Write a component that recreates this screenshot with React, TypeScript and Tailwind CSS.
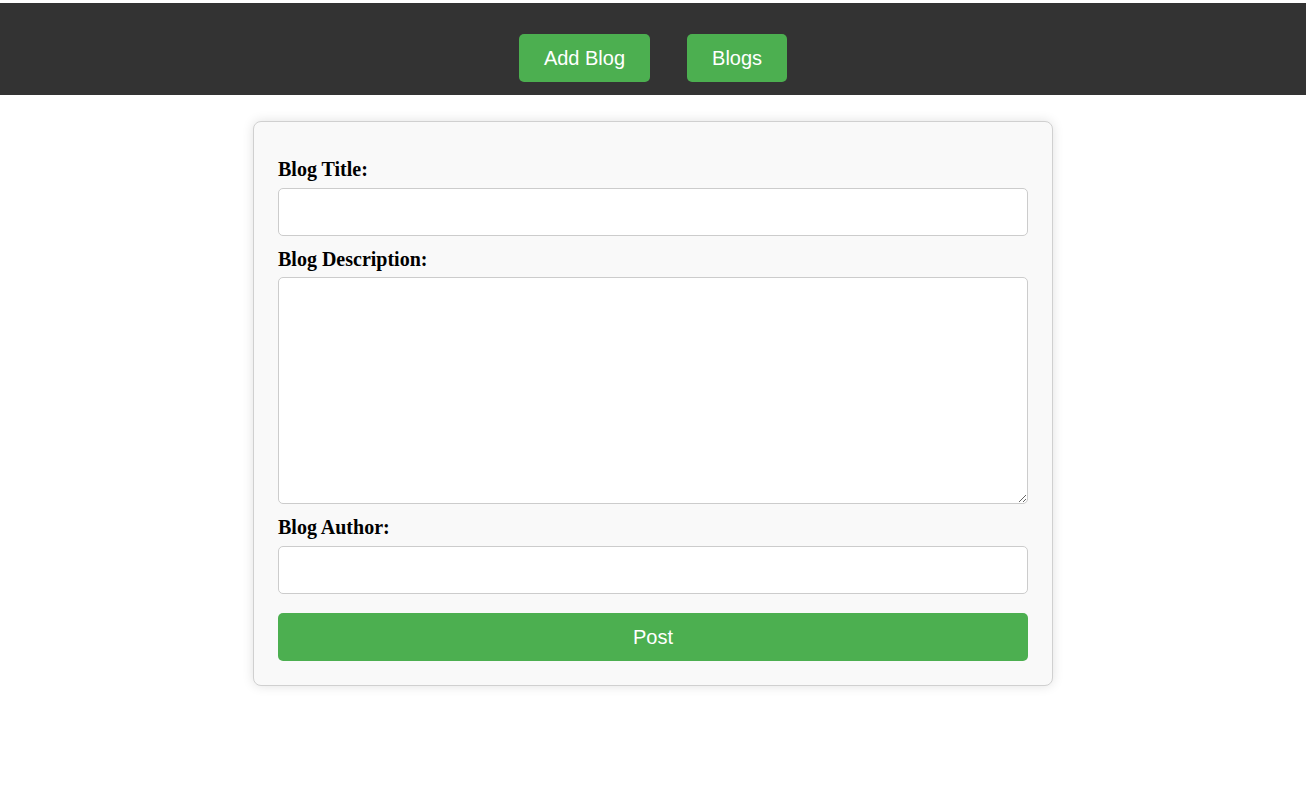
export default function App() {
  return (
    <div className="min-h-screen bg-white pt-[3px] pr-[6px]">
      {/* Nav */}
      <nav className="h-[92px] bg-[#333333] pt-[31px] flex justify-center gap-[37px] font-['Liberation_Sans',Arial,sans-serif]">
        <button className="h-[48px] px-[25px] rounded-[5px] bg-[#4CAF50] text-white text-[20px]">
          Add Blog
        </button>
        <button className="h-[48px] px-[25px] rounded-[5px] bg-[#4CAF50] text-white text-[20px]">
          Blogs
        </button>
      </nav>

      {/* Form card */}
      <div className="w-[800px] mx-auto mt-[26px] bg-[#f9f9f9] border border-[#d0d0d0] rounded-[8px] shadow-[0_0_12px_rgba(0,0,0,0.12)] px-[24px] pt-[36px] pb-[24px]">
        <form className="flex flex-col font-['Liberation_Serif','Times_New_Roman',serif]">
          <label className="block text-[20px] leading-[23px] font-bold text-black mb-[7px]">
            Blog Title:
          </label>
          <input
            type="text"
            className="block w-full h-[48px] bg-white border border-[#cccccc] rounded-[5px] mb-[12px] px-[10px] outline-none"
          />
          <label className="block text-[20px] leading-[23px] font-bold text-black mb-[6px]">
            Blog Description:
          </label>
          <textarea className="block w-full h-[227px] bg-white border border-[#cccccc] rounded-[5px] mb-[12px] p-[10px] outline-none" />
          <label className="block text-[20px] leading-[23px] font-bold text-black mb-[7px]">
            Blog Author:
          </label>
          <input
            type="text"
            className="block w-full h-[48px] bg-white border border-[#cccccc] rounded-[5px] px-[10px] outline-none"
          />
          <button
            type="button"
            className="mt-[19px] w-full h-[48px] rounded-[5px] bg-[#4CAF50] text-white text-[20px] leading-[20px] font-['Liberation_Sans',Arial,sans-serif]"
          >
            Post
          </button>
        </form>
      </div>
    </div>
  );
}
